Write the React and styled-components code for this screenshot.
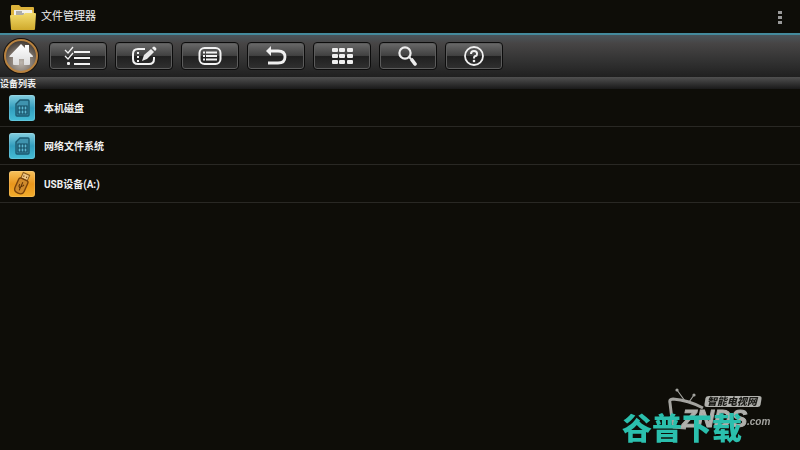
import React from 'react';
import styled, { createGlobalStyle } from 'styled-components';

const tools = [
  { name: 'select', label: '多选', icon: <CheckListIcon /> },
  { name: 'edit', label: '编辑', icon: <EditIcon /> },
  { name: 'list', label: '列表', icon: <ListIcon /> },
  { name: 'back', label: '返回', icon: <BackIcon /> },
  { name: 'grid', label: '网格', icon: <GridIcon /> },
  { name: 'search', label: '搜索', icon: <SearchIcon /> },
  { name: 'help', label: '帮助', icon: <HelpIcon /> },
];

const devices = [
  { id: 'local', name: '本机磁盘', type: 'disk' },
  { id: 'network', name: '网络文件系统', type: 'disk' },
  { id: 'usb', name: 'USB设备(A:)', type: 'usb' },
];

function FolderIcon() {
  return (
    <svg width='26' height='26' viewBox='0 0 26 26' aria-hidden='true'>
      <defs>
        <linearGradient id='folder' x1='0' y1='0' x2='0' y2='1'>
          <stop offset='0' stopColor='#f3dc6c' />
          <stop offset='1' stopColor='#cfa92c' />
        </linearGradient>
      </defs>
      <path d='M1 2q0-1 1-1h7l2 2h12q1 0 1 1v12H1z' fill='#dcb23a' />
      <path d='M4 6h18l1 7H4z' fill='#f3f1e8' />
      <path d='M6 8h6M6 10h8' stroke='#666' strokeWidth='1' />
      <path
        d='M0 12q0-1 1-1h12l2-2h10q1 0 1 1l-1 15q0 1-1 1H2q-1 0-1-1z'
        fill='url(#folder)'
      />
    </svg>
  );
}

function HomeIcon() {
  return (
    <svg width='36' height='36' viewBox='0 0 36 36' aria-hidden='true'>
      <defs>
        <radialGradient id='homeBg' cx='.5' cy='.7' r='.65'>
          <stop offset='0' stopColor='#bdb6ae' />
          <stop offset='.6' stopColor='#7d736a' />
          <stop offset='1' stopColor='#453d36' />
        </radialGradient>
        <linearGradient id='house' x1='0' y1='0' x2='0' y2='1'>
          <stop offset='0' stopColor='#fff' />
          <stop offset='1' stopColor='#dcdcdc' />
        </linearGradient>
      </defs>
      <circle cx='18' cy='18' r='18' fill='#17120e' />
      <circle
        cx='18'
        cy='18'
        r='16'
        fill='url(#homeBg)'
        stroke='#b8823f'
        strokeWidth='2'
      />
      <path
        d='M18 6l4 4V7h4v7l4 4q.5 1-1 1h-2v7q0 1-1 1h-5v-6h-5v6h-5q-1 0-1-1v-7H7q-1 0-.5-1z'
        fill='url(#house)'
      />
    </svg>
  );
}

function CheckListIcon() {
  return (
    <svg width='28' height='20' viewBox='0 0 28 20' aria-hidden='true'>
      <g fill='none' stroke='#f2f2f2'>
        <path d='M10 6h16M10 12h16M10 18h16' strokeWidth='2' />
        <path d='M1 4l3 3 5-6M1 10l3 3 5-6' strokeWidth='1.3' />
      </g>
      <rect x='3' y='16' width='3' height='3' rx='1' fill='#f2f2f2' />
    </svg>
  );
}

function EditIcon() {
  return (
    <svg width='28' height='20' viewBox='0 0 28 20' aria-hidden='true'>
      <path
        d='M15 3H8Q3 3 3 8v5q0 5 5 5h11q5 0 5-5v-2'
        fill='none'
        stroke='#f2f2f2'
        strokeWidth='2'
      />
      <path d='M7 6h2v2H7zM7 10h2v2H7zM7 14h2v2H7z' fill='#f2f2f2' />
      <path d='M12 15l2-6 7-6 3 3-7 7z' fill='#e8e8e8' />
      <path d='M22 2l1-1q1-1 2 0l1 1q1 1 0 2l-1 1z' fill='#f2f2f2' />
    </svg>
  );
}

function ListIcon() {
  return (
    <svg width='28' height='20' viewBox='0 0 28 20' aria-hidden='true'>
      <rect
        x='3.5'
        y='2'
        width='21'
        height='16'
        rx='5'
        fill='none'
        stroke='#f2f2f2'
        strokeWidth='2'
      />
      <g stroke='#f2f2f2' strokeWidth='1.8'>
        <path d='M10 6.5h11M10 10h11M10 13.500h11' />
        <path d='M7 6.5h2M7 10h2M7 13.500h2' />
      </g>
    </svg>
  );
}

function BackIcon() {
  return (
    <svg width='28' height='20' viewBox='0 0 28 20' aria-hidden='true'>
      <path
        d='M8 5h8q7 0 7 6t-7 6H6'
        fill='none'
        stroke='#f0f0f0'
        strokeWidth='2.8'
      />
      <path d='M4 5l5-5v10z' fill='#f0f0f0' />
    </svg>
  );
}

function GridIcon() {
  return (
    <svg width='28' height='20' viewBox='0 0 28 20' aria-hidden='true'>
      {[2, 8, 14].map((y) =>
        [4, 11, 19].map((x) => (
          <rect
            key={`${x}-${y}`}
            x={x}
            y={y}
            width='6'
            height='4'
            rx='1'
            fill='#eee'
          />
        ))
      )}
    </svg>
  );
}

function SearchIcon() {
  return (
    <svg width='28' height='20' viewBox='0 0 28 20' aria-hidden='true'>
      <g fill='none' stroke='#ededed'>
        <circle cx='11' cy='7' r='5.6' strokeWidth='2.2' />
        <path d='M15 11l2 2' strokeWidth='2' />
        <path d='M18 14l3 4' strokeWidth='3.6' strokeLinecap='round' />
      </g>
    </svg>
  );
}

function HelpIcon() {
  return (
    <svg width='28' height='20' viewBox='0 0 28 20' aria-hidden='true'>
      <g fill='none' stroke='#f0f0f0'>
        <circle cx='14' cy='10' r='9' strokeWidth='1.8' />
        <path d='M11 8q0-3 3-3t3 2.5-1.500 2.500-1.500 2.500' strokeWidth='2' />
      </g>
      <circle cx='14' cy='15' r='1.3' fill='#f0f0f0' />
    </svg>
  );
}

function DiskIcon() {
  return (
    <svg width='26' height='26' viewBox='0 0 26 26' aria-hidden='true'>
      <path
        d='M11 5h8q1 0 1 1v14q0 1-1 1H8q-1 0-1-1V9z'
        fill='#3f93ae'
        stroke='#1b5a70'
        strokeWidth='1.4'
      />
      <path
        d='M9 11h9v8H9zM9 15h9M12 11v8M15 11v8'
        fill='#5db8d2'
        stroke='#134a60'
        strokeWidth='1.2'
      />
    </svg>
  );
}

function UsbIcon() {
  return (
    <svg width='26' height='26' viewBox='0 0 26 26' aria-hidden='true'>
      <g transform='rotate(24 13 13)'>
        <rect
          x='9.5'
          y='2'
          width='7'
          height='6'
          fill='#efc888'
          stroke='#8a5a1c'
          strokeWidth='1'
        />
        <path d='M11 5h1M14 5h1' stroke='#74400a' strokeWidth='1.4' />
        <path
          d='M8 10q0-2 2-2h6q2 0 2 2v9q0 4-5 4t-5-4z'
          fill='#cf8a2c'
          stroke='#7a430a'
          strokeWidth='1.4'
        />
        <path
          d='M13 20v-9M13 18l-2-2v-2M13 16l2-2v-1'
          fill='none'
          stroke='#5f3206'
          strokeWidth='1'
        />
      </g>
    </svg>
  );
}

function TvLogo() {
  return (
    <svg width='104' height='44' viewBox='0 0 104 44' aria-hidden='true'>
      <g fill='none' stroke='#a3a39f'>
        <path d='M17 15L9 4M21 16l5-7' strokeWidth='1.2' />
        <path d='M35 22Q20 14 5 13q-4 0-3 4 1 13 4 24l12 1' strokeWidth='3' />
      </g>
      <circle cx='9' cy='4' r='1.6' fill='#a3a39f' />
      <circle cx='26' cy='9' r='1.6' fill='#a3a39f' />
      <path
        d='M41 10h50q3 0 2.500 3l-1 6q-.5 2-3 2H39q-3 0-2.500-3l1-6q.5-2 3.500-2z'
        fill='#b0b0ac'
      />
      <LogoTag x='39' y='19'>
        智能电视网
      </LogoTag>
      <LogoName x='14' y='41'>
        ZNDS
      </LogoName>
      <LogoDomain x='79' y='39'>
        .com
      </LogoDomain>
    </svg>
  );
}

const App = () => {
  return (
    <>
      <GlobalStyle />
      <Header>
        <FolderIcon />
        <h1>文件管理器</h1>
        <MenuButton type='button' aria-label='更多选项'>
          <span />
          <span />
          <span />
        </MenuButton>
      </Header>
      <Toolbar>
        <HomeButton type='button' aria-label='主页'>
          <HomeIcon />
        </HomeButton>
        {tools.map(({ name, label, icon }) => (
          <ToolButton key={name} type='button' aria-label={label}>
            {icon}
          </ToolButton>
        ))}
      </Toolbar>
      <main>
        <SectionTitle>设备列表</SectionTitle>
        <DeviceList>
          {devices.map(({ id, name, type }) => (
            <li key={id}>
              <DeviceButton type='button'>
                <DeviceTile $type={type}>
                  {type === 'usb' ? <UsbIcon /> : <DiskIcon />}
                </DeviceTile>
                {name}
              </DeviceButton>
            </li>
          ))}
        </DeviceList>
      </main>
      <Watermark>
        <TvLogo />
        <SiteName>谷普下载</SiteName>
      </Watermark>
    </>
  );
};

const GlobalStyle = createGlobalStyle`
  * {
    box-sizing: border-box;
  }
  body {
    margin: 0;
    background: #0e0d08;
    color: #f0f0f0;
    font-family: Roboto, 'Noto Sans CJK SC', sans-serif;
  }
  button {
    border: 0;
    padding: 0;
    background: none;
    color: inherit;
    font: inherit;
    cursor: pointer;
  }
  svg {
    display: block;
  }
`;

const Header = styled.header`
  display: flex;
  align-items: center;
  gap: 5px;
  height: 35px;
  padding: 1px 12px 0 10px;
  border-bottom: 2px solid #448a9c;
  h1 {
    flex: 1;
    margin: 0;
    font-size: 11px;
    font-weight: 400;
    line-height: 16px;
  }
`;

const MenuButton = styled.button`
  display: grid;
  gap: 2px;
  justify-content: center;
  width: 16px;
  span {
    width: 4px;
    height: 3px;
    background: #999;
  }
`;

const Toolbar = styled.nav`
  display: flex;
  align-items: center;
  gap: 8px;
  height: 42px;
  padding: 0 3px;
  background: linear-gradient(#4b555b, #474545 20%, #333 60%, #202020);
`;

const HomeButton = styled.button`
  width: 38px;
  height: 36px;
`;

const ToolButton = styled.button`
  display: flex;
  align-items: center;
  justify-content: center;
  width: 58px;
  height: 28px;
  && {
    border: 1px solid #0c0c0c;
  }
  border-radius: 4px;
  background: linear-gradient(#6a6a6a, #414141 48%, #202020 52%, #303030);
  box-shadow: inset 0 0 0 1px #5c5c5c;
`;

const SectionTitle = styled.h2`
  margin: 0;
  height: 12px;
  background: linear-gradient(#505050, #191919);
  font-size: 9px;
  font-weight: 700;
  line-height: 14px;
`;

const DeviceList = styled.ul`
  margin: 0;
  padding: 0;
  list-style: none;
`;

const DeviceButton = styled.button`
  display: flex;
  align-items: center;
  gap: 9px;
  width: 100%;
  height: 38px;
  && {
    padding: 0 9px;
    border-bottom: 1px solid #292824;
    font-size: 10px;
    font-weight: 700;
  }
`;

const DeviceTile = styled.span`
  width: 26px;
  height: 26px;
  border-radius: 3px;
  background: ${({ $type }) =>
    $type === 'usb'
      ? 'linear-gradient(#f8c25c, #e9961c 50%, #f2ad2c)'
      : 'linear-gradient(#85cfe0, #329dbd 50%, #45bdd6)'};
  box-shadow: inset 0 0 0 1px rgba(255, 255, 255, 0.15);
`;

const Watermark = styled.aside`
  position: fixed;
  right: 28px;
  bottom: 3px;
  display: grid;
  justify-items: end;
`;

const SiteName = styled.strong`
  margin: -19px 30px 0 0;
  color: #2bbfad;
  font-size: 30px;
  font-weight: 900;
  line-height: 36px;
`;

const LogoTag = styled.text`
  fill: #1c1c18;
  font-size: 10px;
  font-style: italic;
  font-weight: 900;
`;

const LogoName = styled.text`
  fill: #b0b0ac;
  stroke: #b0b0ac;
  font-family: 'Liberation Sans', sans-serif;
  font-size: 24px;
  font-style: italic;
  font-weight: 700;
`;

const LogoDomain = styled.text`
  fill: #a3a39f;
  font-family: 'Liberation Sans', sans-serif;
  font-size: 10px;
  font-style: italic;
  font-weight: 700;
`;

export default App;
